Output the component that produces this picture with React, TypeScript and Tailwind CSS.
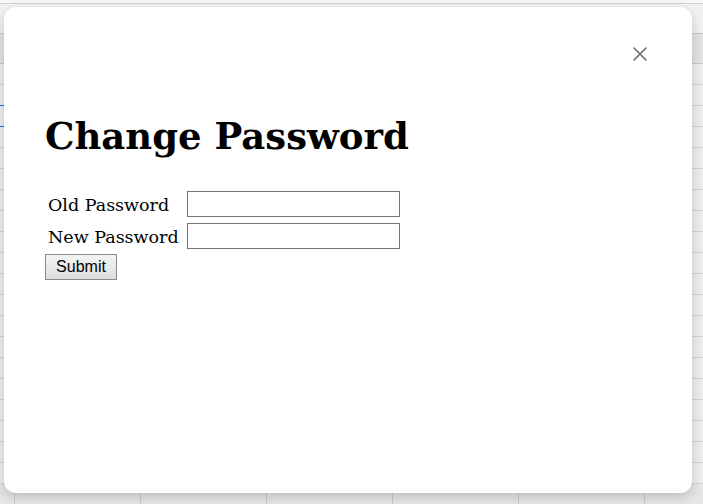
import React from "react";

const rowLines = Array.from({ length: 20 }, (_, i) => i);

export default function App() {
  return (
    <div className="relative w-[703px] h-[504px] overflow-hidden bg-[#eeeeee]">
      {/* background sheet */}
      <div className="flex flex-col w-full h-full">
        <div className="h-[3px] bg-[#f7f7f7]" />
        <div className="h-[1px] bg-[#d2d2d2]" />
        <div className="h-[29px] bg-[#f1f1f1]" />
        <div className="h-[1px] bg-[#c8c8c8]" />
        <div className="h-[29px] bg-[#e3e3e3]" />
        <div className="h-[1px] bg-[#c8c8c8]" />
        {rowLines.map((i) => (
          <div key={i} className="flex h-[21px] bg-[#eeeeee]">
            <div
              className={
                i === 1 || i === 2
                  ? "w-[141px] border-b border-[#1a73e8]"
                  : "w-[141px] border-b border-[#d4d4d4]"
              }
            />
            <div className="flex-1 border-b border-[#d4d4d4]" />
          </div>
        ))}
        <div className="flex-1 flex bg-[#e6e6e6]">
          <div className="w-[15px] border-r border-[#cccccc]" />
          <div className="w-[126px] border-r border-[#cccccc]" />
          <div className="w-[126px] border-r border-[#cccccc]" />
          <div className="w-[126px] border-r border-[#cccccc]" />
          <div className="w-[126px] border-r border-[#cccccc]" />
          <div className="w-[126px] border-r border-[#cccccc]" />
        </div>
      </div>

      {/* dialog */}
      <div className="absolute left-[4px] top-[7px] w-[688px] h-[486px] rounded-[12px] bg-white shadow-[0_4px_12px_rgba(0,0,0,0.18)] flex flex-col px-[41px]">
        <div className="flex justify-end pt-[40px]">
          <svg width="14" height="14" viewBox="0 0 14 14" className="mr-[4px]">
            <path d="M1 1 L13 13 M13 1 L1 13" stroke="#6b6b6b" strokeWidth="1.6" strokeLinecap="round" />
          </svg>
        </div>
        <h1
          className="mt-[55px] text-[37px] font-bold leading-[40px] text-black"
          style={{ fontFamily: '"DejaVu Serif", Georgia, serif' }}
        >
          Change Password
        </h1>
        <div
          className="mt-[35px] pl-[3px] grid grid-cols-[139px_213px] gap-y-[6px] items-center"
          style={{ fontFamily: '"DejaVu Serif", Georgia, serif' }}
        >
          <div className="pt-[2px] text-[17.5px] text-black leading-[24px]">Old Password</div>
          <div className="h-[26px] border border-[#767676] bg-white" />
          <div className="pt-[2px] text-[17.5px] text-black leading-[24px]">New Password</div>
          <div className="h-[26px] border border-[#767676] bg-white" />
        </div>
        <div className="mt-[5px] flex">
          <button
            className="w-[72px] h-[26px] border border-[#8a8a8a] bg-gradient-to-b from-[#f4f4f4] to-[#dedede] text-[16px] text-black leading-[24px]"
            style={{ fontFamily: '"Liberation Sans", Arial, sans-serif' }}
          >
            Submit
          </button>
        </div>
      </div>
    </div>
  );
}
